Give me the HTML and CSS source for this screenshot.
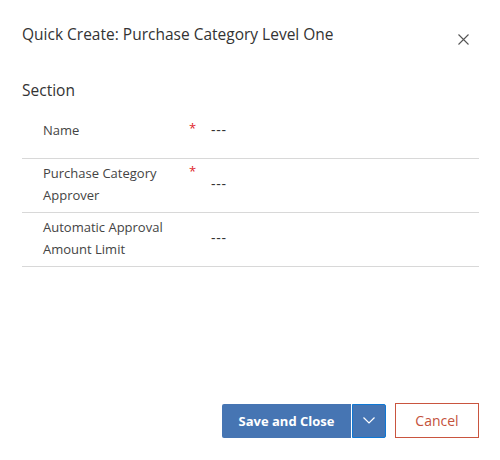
FILE: index.html
```html
<!DOCTYPE html>
<html>
<head>
<meta charset="utf-8">
<link rel="stylesheet" href="styles.css">
</head>
<body>
<div class="dialog">
  <header class="header">
    <h1 class="title">Quick Create: Purchase Category Level One</h1>
    <button class="close" aria-label="Close">
      <svg width="11" height="11" viewBox="0 0 11 11"><path d="M0.5 0.5 L10.5 10.5 M10.5 0.5 L0.5 10.5" stroke="#555" stroke-width="1.1" fill="none"/></svg>
    </button>
  </header>
  <section class="section">
    <h2 class="section-title">Section</h2>
    <div class="row">
      <div class="field">
        <div class="label">Name</div>
        <div class="req">*</div>
      </div>
      <div class="value">---</div>
    </div>
    <div class="row">
      <div class="field">
        <div class="label">Purchase Category Approver</div>
        <div class="req">*</div>
      </div>
      <div class="value">---</div>
    </div>
    <div class="row">
      <div class="field">
        <div class="label">Automatic Approval Amount Limit</div>
        <div class="req"></div>
      </div>
      <div class="value">---</div>
    </div>
  </section>
  <footer class="footer">
    <div class="split">
      <button class="save">Save and Close</button>
      <button class="more" aria-label="More">
        <svg width="12" height="7" viewBox="0 0 12 7"><path d="M0.5 0.5 L6 6 L11.5 0.5" stroke="#fff" stroke-width="1.2" fill="none"/></svg>
      </button>
    </div>
    <button class="cancel">Cancel</button>
  </footer>
</div>
</body>
</html>
```

FILE: styles.css
```css
html, body {
  margin: 0;
  padding: 0;
  background: #fff;
}
body {
  font-family: "Open Sans", "Noto Sans", sans-serif;
  color: #333;
}
.dialog {
  width: 500px;
  height: 460px;
  display: flex;
  flex-direction: column;
}
.header {
  display: flex;
  align-items: flex-start;
  justify-content: space-between;
  padding: 22px 31px 0 22px;
}
.title {
  margin: 0;
  font-size: 15.5px;
  font-weight: 400;
  line-height: 24px;
  color: #333;
}
.close {
  border: 0;
  background: none;
  padding: 0;
  margin-top: 12px;
  width: 11px;
  height: 11px;
  display: block;
}
.close svg { display: block; }
.section {
  padding: 0 21px 0 22px;
}
.section-title {
  margin: 32px 0 0;
  font-size: 15.5px;
  font-weight: 400;
  line-height: 24px;
  color: #333;
}
.row {
  display: flex;
  align-items: center;
  min-height: 54px;
  box-sizing: border-box;
  padding: 2px 0 6px 21px;
  border-bottom: 1px solid #d8d8d8;
}
.section-title + .row { margin-top: 3px; }
.field {
  display: flex;
  align-items: flex-start;
}
.label {
  width: 144px;
  font-size: 13px;
  line-height: 22px;
  color: #444;
}
.req {
  width: 24px;
  padding-left: 2px;
  box-sizing: border-box;
  color: #e0262b;
  font-size: 13px;
  line-height: 18px;
}
.value {
  font-size: 14px;
  color: #333;
  letter-spacing: 0.8px;
}
.footer {
  margin-top: auto;
  display: flex;
  justify-content: flex-end;
  align-items: center;
  gap: 9px;
  padding: 0 21px 22px 0;
}
.split {
  display: flex;
  height: 34px;
}
.save {
  border: 0;
  background: #4675b3;
  color: #fff;
  font-family: inherit;
  font-weight: 700;
  font-size: 13px;
  width: 130px;
  height: 34px;
  padding: 0;
  border-radius: 2px 0 0 2px;
  border-right: 1px solid #fff;
}
.more {
  border: 1px solid #0f78d4;
  background: #4675b3;
  width: 34px;
  height: 34px;
  padding: 0;
  display: flex;
  align-items: center;
  justify-content: center;
  border-radius: 0 2px 2px 0;
}
.more svg { display: block; }
.cancel {
  border: 1px solid #c9553f;
  background: #fff;
  color: #c4523c;
  font-family: inherit;
  font-size: 14px;
  width: 84px;
  height: 35px;
  padding: 0;
}
```
